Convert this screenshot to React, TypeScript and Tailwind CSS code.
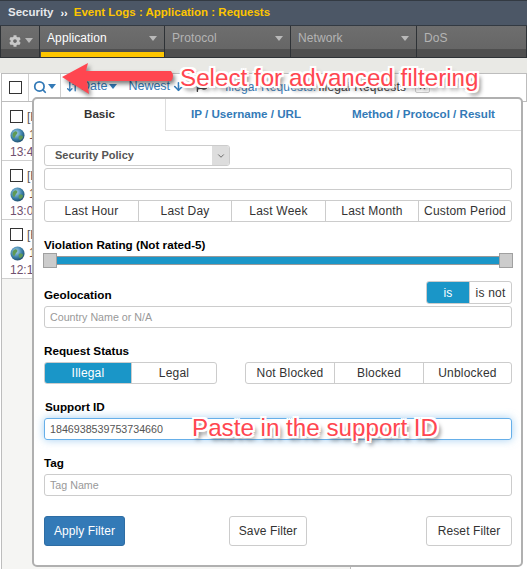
import React from "react";
import { Search, ArrowDownUp, ArrowDown, X, ChevronDown } from "lucide-react";
import { FaCog, FaFlag } from "react-icons/fa";

const Caret = ({ c = "border-t-[#b9b9b9]" }: { c?: string }) => (
  <span className={`block w-0 h-0 border-x-[4px] border-x-transparent border-t-[5px] ${c}`} />
);

const NavItem = ({ label, w, active, caret = true }: { label: string; w: string; active?: boolean; caret?: boolean }) => (
  <div className={`${w} relative h-full flex items-start justify-between pl-[7px] pr-[7px] pt-[4px] border-r border-[#2e3236] ${active ? "text-white" : "text-[#b4b4b4]"}`}>
    <span className="text-[12px] leading-[16px] tracking-[0.1px]">{label}</span>
    {caret && <span className="block mt-[6px]"><Caret /></span>}
    {active && <span className="absolute left-[1px] right-0 bottom-0 h-[5px] bg-[#fdc500]" />}
  </div>
);

const Box = () => <span className="block w-[13px] h-[13px] border border-[#333] bg-white shrink-0" />;

const Globe = () => (
  <svg width="15" height="15" viewBox="0 0 15 15" className="shrink-0">
    <defs>
      <radialGradient id="g" cx="40%" cy="35%" r="70%">
        <stop offset="0%" stopColor="#a8d4ee" />
        <stop offset="60%" stopColor="#3c80a8" />
        <stop offset="100%" stopColor="#1d4b68" />
      </radialGradient>
    </defs>
    <circle cx="7.5" cy="7.5" r="7" fill="url(#g)" />
    <path d="M3 5c2-2 3-2 4-1s0 2-1 3-1 3-2 3-2-3-1-5zM9 8c2-1 4 0 4 1s-2 3-3 3-2-3-1-4z" fill="#5f9a55" />
  </svg>
);

const Row = ({ time }: { time: string }) => (
  <div className="h-[59px] border-b border-[#cfcfcf] bg-white pl-[8px] pt-[8px]">
    <div className="flex items-center gap-[4px] h-[13px]"><Box /><span className="text-[12px] text-[#555]">[H</span></div>
    <div className="flex items-center gap-[4px] mt-[3px]"><Globe /><span className="text-[12px] text-[#7a4a3b]">1</span></div>
    <div className="text-[12px] text-[#70506e] mt-[1px] leading-[14px]">{time}</div>
  </div>
);

const Seg = ({ items, className, active }: { items: { t: string; w?: string }[]; className: string; active?: number }) => (
  <div className={`flex h-[22px] border border-[#cccccc] rounded-[3px] overflow-hidden text-[12px] tracking-[0.2px] ${className}`}>
    {items.map((it, i) => (
      <div
        key={it.t}
        className={`${it.w ?? "flex-1"} flex items-center justify-center ${i > 0 ? "border-l border-[#cccccc]" : ""} ${active === i ? "bg-[#1a96c8] text-white" : "text-[#333]"}`}
      >
        {it.t}
      </div>
    ))}
  </div>
);

const Label = ({ children, className = "" }: { children: React.ReactNode; className?: string }) => (
  <div className={`text-[11.7px] font-bold text-black leading-[14px] ${className}`}>{children}</div>
);

const Field = ({ text, placeholder, focus }: { text?: string; placeholder?: string; focus?: boolean }) => (
  <div className={`h-[22px] rounded-[3px] border flex items-center pl-[5px] text-[10.7px] ${focus ? "border-[#66afe9] shadow-[0_0_8px_rgba(102,175,233,0.6)] text-[#555]" : "border-[#cccccc] text-[#999]"}`}>
    {text ?? placeholder}
  </div>
);

const Handle = () => <span className="block w-[14px] h-[15px] bg-[#cccccc] border border-[#a0a0a0] shrink-0" />;

const note =
  "text-[#ff4650] text-[24.2px] leading-[28px] whitespace-nowrap [text-shadow:-2px_-2px_0_#fff,2px_-2px_0_#fff,-2px_2px_0_#fff,2px_2px_0_#fff,0_-2px_0_#fff,0_2px_0_#fff,-2px_0_0_#fff,2px_0_0_#fff,3px_4px_4px_#555]";

export default function App() {
  return (
    <div className="relative w-[527px] h-[569px] overflow-hidden bg-white font-['Liberation_Sans',Arial,sans-serif]">
      <div className="h-[26px] bg-[#4c5766] border-y border-[#333a42] flex items-center pl-[8px] text-[11.5px] font-bold">
        <span className="text-[#e6e9ec]">Security</span>
        <span className="text-white ml-[7px] mr-[6px] text-[11px]">››</span>
        <span className="text-[#fdc500]">Event Logs : Application : Requests</span>
      </div>

      <div className="h-[32px] flex border-b border-[#2e3236] bg-[linear-gradient(#6e6e6e,#666_75%,#4f4f4f_75%,#4f4f4f)]">
        <div className="w-[40px] h-full flex items-center pl-[8px] gap-[4px] border-x border-[#2e3236] pb-[2px]">
          <FaCog size={12} color="#c8c8c8" />
          <Caret />
        </div>
        <NavItem label="Application" w="w-[125px]" active />
        <NavItem label="Protocol" w="w-[126px]" />
        <NavItem label="Network" w="w-[126px]" />
        <NavItem label="DoS" w="flex-1" caret={false} />
      </div>

      <div className="h-[15px] bg-[#e9e9e5]" />

      <div className="h-[29px] ml-[1px] flex items-center bg-white border border-[#bdbdbd] text-[12px] text-[#337ab7]">
        <div className="w-[27px] h-full flex items-center justify-center border-r border-[#cfcfcf]"><Box /></div>
        <div className="w-[32px] h-full flex items-center justify-center gap-[1px] border-r border-[#cfcfcf] pb-[2px]">
          <Search size={14} strokeWidth={3} />
          <Caret c="border-t-[#337ab7]" />
        </div>
        <div className="flex items-center gap-[2px] pl-[5px] pb-[2px] text-[12.5px] w-[128px] shrink-0 whitespace-nowrap">
          <ArrowDownUp size={13} strokeWidth={2.5} className="shrink-0" />
          <span>Date</span>
          <Caret c="border-t-[#337ab7]" />
          <span className="ml-[9px]">Newest</span>
          <ArrowDown size={13} strokeWidth={3} className="shrink-0" />
        </div>
        <div className="flex items-center pl-[7px] pb-[2px] text-[12px] whitespace-nowrap tracking-[0.15px]">
          <span className="w-[29px] text-[#333]"><FaFlag size={11} /></span>
          <span>Illegal Requests:</span>
          <span className="text-[#333] ml-[2px]">Illegal Requests</span>
          <span className="ml-[9px] w-[15px] h-[13px] border border-[#ccc] rounded-[2px] flex items-center justify-center text-[#555]"><X size={9} strokeWidth={3} /></span>
        </div>
      </div>

      <div className="ml-[1px] w-[350px] h-[470px] border-x border-[#bdbdbd] bg-[#f5f5f3]">
        <Row time="13:40" />
        <Row time="13:05" />
        <Row time="12:11" />
      </div>

      {/* Filter popover */}
      <div className="absolute left-[32px] top-[97px] w-[491px] h-[470px] bg-white border-2 border-[#b0b0b0] rounded-[5px] flex flex-col">
        <div className="flex h-[32px] text-[11.6px] font-bold text-[#337ab7]">
          <div className="w-[132px] flex items-center justify-center text-[#333] border-r border-[#dddddd] pb-[2px]">Basic</div>
          <div className="flex-1 flex items-center border-b border-[#dddddd] pb-[2px]">
            <span className="ml-[25px]">IP / Username / URL</span>
            <span className="ml-[51px]">Method / Protocol / Result</span>
          </div>
        </div>

        <div className="pl-[10px] pr-[9px] flex flex-col">
          <div className="mt-[14px] w-[186px] h-[21px] flex border border-[#cccccc] rounded-[3px] text-[11px] font-bold text-[#555] overflow-hidden">
            <div className="flex-1 flex items-center pl-[10px]">Security Policy</div>
            <div className="w-[17px] bg-[#dddddd] flex items-center justify-center"><ChevronDown size={10} /></div>
          </div>
          <div className="mt-[2px] h-[22px] border border-[#cccccc] rounded-[3px]" />
          <Seg
            className="mt-[10px]"
            items={[
              { t: "Last Hour", w: "w-[93px]" },
              { t: "Last Day", w: "w-[93px]" },
              { t: "Last Week", w: "w-[94px]" },
              { t: "Last Month", w: "w-[93px]" },
              { t: "Custom Period", w: "flex-1" },
            ]}
          />
          <Label className="mt-[16px]">Violation Rating (Not rated-5)</Label>
          <div className="mt-[1px] relative h-[15px] -mx-[1px]">
            <div className="absolute left-[1px] right-[1px] top-[3px] h-[9px] bg-[#1a96c8] border border-[#999]" />
            <div className="relative flex justify-between"><Handle /><Handle /></div>
          </div>

          <div className="mt-[13px] flex items-end justify-between h-[23px]">
            <Label className="mb-[2px]">Geolocation</Label>
            <Seg
              className="!h-[23px] w-[86px]"
              active={0}
              items={[{ t: "is", w: "w-[42px]" }, { t: "is not", w: "flex-1" }]}
            />
          </div>
          <div className="mt-[2px]"><Field placeholder="Country Name or N/A" /></div>

          <Label className="mt-[16px]">Request Status</Label>
          <div className="mt-[4px] flex justify-between">
            <Seg
              className="w-[173px]"
              active={0}
              items={[{ t: "Illegal", w: "w-[86px]" }, { t: "Legal", w: "flex-1" }]}
            />
            <Seg
              className="w-[267px]"
              items={[{ t: "Not Blocked", w: "w-[88px]" }, { t: "Blocked", w: "w-[89px]" }, { t: "Unblocked", w: "flex-1" }]}
            />
          </div>

          <Label className="mt-[16px] ml-[1px]">Support ID</Label>
          <div className="mt-[4px]"><Field text="1846938539753734660" focus /></div>

          <Label className="mt-[16px]">Tag</Label>
          <div className="mt-[4px]"><Field placeholder="Tag Name" /></div>

          <div className="mt-[20px] flex text-[12px] text-[#333] tracking-[0.1px]">
            <div className="w-[81px] h-[30px] rounded-[3px] bg-[#337ab7] border border-[#2e6da4] text-white flex items-center justify-center">Apply Filter</div>
            <div className="ml-[104px] w-[78px] h-[30px] rounded-[3px] border border-[#cccccc] flex items-center justify-center">Save Filter</div>
            <div className="ml-auto w-[86px] h-[30px] rounded-[3px] border border-[#cccccc] flex items-center justify-center">Reset Filter</div>
          </div>
        </div>
      </div>

      {/* Annotations */}
      <svg className="absolute left-[55px] top-[58px] drop-shadow-[2px_3px_2px_rgba(0,0,0,0.5)]" width="125" height="42" viewBox="0 0 125 42">
        <path d="M7 19 L33 5 L31 13 L116 13 Q120 18 116 23 L32 23 L34 36 Z" fill="#ff4650" />
      </svg>
      <div className={`absolute left-[180px] top-[64px] ${note}`}>Select for advanced filtering</div>
      <div className={`absolute left-[192px] top-[414px] ${note}`}>Paste in the support ID</div>
    </div>
  );
}
